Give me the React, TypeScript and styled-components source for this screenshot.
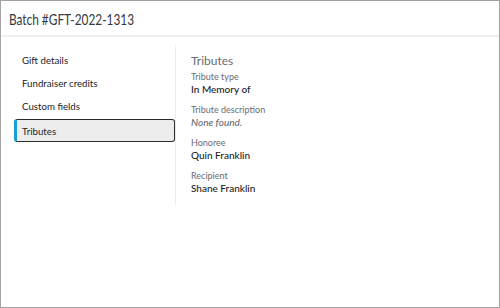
import React from "react";
import styled, { createGlobalStyle } from "styled-components";

const GlobalStyle = createGlobalStyle`
  html, body {
    margin: 0;
    padding: 0;
    background: #fff;
  }
  body {
    font-family: Lato, "Open Sans", sans-serif;
    color: #212327;
  }
`;

const navItems = ["Gift details", "Fundraiser credits", "Custom fields", "Tributes"];

const fields = [
  { label: "Tribute type", value: "In Memory of" },
  { label: "Tribute description", value: "None found.", empty: true },
  { label: "Honoree", value: "Quin Franklin" },
  { label: "Recipient", value: "Shane Franklin" },
];

export default function App() {
  return (
    <>
      <GlobalStyle />
      <Frame>
        <Header>
          <Title>Batch #GFT-2022-1313</Title>
        </Header>
        <Body>
          <Nav>
            {navItems.map((item) => (
              <NavItem key={item} $active={item === "Tributes"}>
                {item}
              </NavItem>
            ))}
          </Nav>
          <Content>
            <Heading>Tributes</Heading>
            {fields.map((f) => (
              <Field key={f.label}>
                <Label>{f.label}</Label>
                <Value $empty={f.empty}>{f.value}</Value>
              </Field>
            ))}
          </Content>
        </Body>
      </Frame>
    </>
  );
}

const Frame = styled.div`
  box-sizing: border-box;
  width: 500px;
  height: 308px;
  border: 1px solid #a3a3a3;
  background: #fff;
  display: flex;
  flex-direction: column;
`;

const Header = styled.div`
  height: 34px;
  border-bottom: 2px solid #f0f0f0;
  display: flex;
  align-items: center;
  padding: 0 8px;
`;

/* the original heading face is a condensed sans */
const Title = styled.h1`
  margin: 0;
  font-family: Lato, sans-serif;
  font-weight: 400;
  font-size: 16px;
  color: #373a3e;
  white-space: nowrap;
  transform: scaleX(0.74);
  transform-origin: left center;
`;

const Body = styled.div`
  display: flex;
  padding: 8px 0 0 13px;
`;

const Nav = styled.div`
  width: 161px;
  padding-top: 4px;
  display: flex;
  flex-direction: column;
  gap: 1px;
`;

const NavItem = styled.div<{ $active?: boolean }>`
  box-sizing: border-box;
  height: 22px;
  display: flex;
  align-items: center;
  padding-left: 7px;
  font-size: 9.7px;
  color: #212327;
  border-radius: 3px;
  border: 1px solid ${(p) => (p.$active ? "#2b2b2b" : "transparent")};
  border-left: ${(p) => (p.$active ? "3px solid #1b9ed8" : "1px solid transparent")};
  background: ${(p) => (p.$active ? "#ededed" : "transparent")};
  ${(p) => (p.$active ? "padding-left: 5px; height: 23px; margin-top: 1px;" : "")}
`;

const Content = styled.div`
  border-left: 1px solid #ececec;
  padding: 8px 0 10px 15px;
  display: flex;
  flex-direction: column;
  gap: 8px;
  min-height: 142px;
`;

const Heading = styled.h2`
  margin: 0 0 -5px;
  font-size: 12px;
  line-height: 15px;
  font-weight: 400;
  color: #686c73;
`;

const Field = styled.div`
  display: flex;
  flex-direction: column;
`;

const Label = styled.div`
  font-size: 9px;
  line-height: 12px;
  color: #686c73;
`;

const Value = styled.div<{ $empty?: boolean }>`
  font-size: 10px;
  line-height: 13px;
  font-weight: 500;
  font-style: ${(p) => (p.$empty ? "italic" : "normal")};
  color: ${(p) => (p.$empty ? "#686c73" : "#212327")};
`;
